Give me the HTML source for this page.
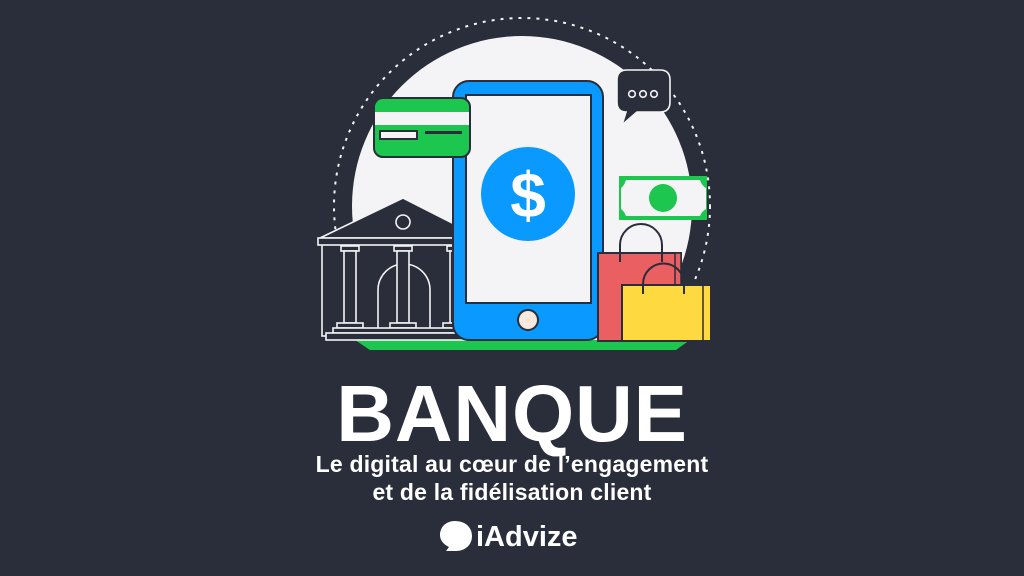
<!DOCTYPE html>
<html><head><meta charset="utf-8"><style>
html,body{margin:0;padding:0}
body{width:1024px;height:576px;background:#2a2d3a;position:relative;overflow:hidden;font-family:"Liberation Sans",sans-serif;color:#fff}
.t{position:absolute;left:0;width:1024px;text-align:center;white-space:nowrap;font-weight:bold}
</style></head><body>
<svg width="1024" height="576" style="position:absolute;left:0;top:0">
<defs><clipPath id="cc"><rect x="0" y="0" width="1024" height="342"/></clipPath></defs>
<circle cx="522" cy="206" r="188" fill="none" stroke="#f4f4f6" stroke-width="2" stroke-dasharray="3 6" clip-path="url(#cc)"/>
<circle cx="522" cy="206" r="170" fill="#f4f4f6" clip-path="url(#cc)"/>
<path d="M355 340 L690 340 L676 350 L370 350 Z" fill="#1dc64f"/>
<!-- bank -->
<g fill="#2a2d3a" stroke="#f4f4f6" stroke-width="1.6">
<rect x="322" y="244" width="144" height="92"/>
<path d="M320 238 L403 198 L470 232 L470 238 Z"/>
<rect x="318" y="238" width="150" height="7"/>
<path d="M378 333 L378 290 A26 26 0 0 1 430 290 L430 333" fill="none"/>
<rect x="341" y="246" width="18" height="5"/><rect x="344" y="251" width="12" height="72"/>
<rect x="394" y="246" width="18" height="5"/><rect x="397" y="251" width="12" height="72"/>
<rect x="447" y="246" width="18" height="5"/><rect x="450" y="251" width="12" height="72"/>
<rect x="337" y="323" width="26" height="5"/><rect x="390" y="323" width="26" height="5"/><rect x="443" y="323" width="26" height="5"/>
<rect x="333" y="328" width="134" height="5"/>
<rect x="326" y="333" width="140" height="7"/>
<circle cx="403" cy="222" r="7"/>
</g>
<!-- phone -->
<rect x="453" y="81" width="150" height="259" rx="16" fill="#0a99ff" stroke="#2a2d3a" stroke-width="2"/>
<rect x="466" y="95" width="125" height="208" fill="#f4f4f6" stroke="#2a2d3a" stroke-width="2"/>
<circle cx="528" cy="320" r="10" fill="#fbe8dd" stroke="#2a2d3a" stroke-width="2"/>
<circle cx="528" cy="194" r="47" fill="#0a99ff"/>
<text x="528" y="217" font-family="Liberation Sans" font-weight="bold" font-size="64" fill="#fff" text-anchor="middle">$</text>
<!-- card -->
<rect x="374" y="98" width="96" height="59" rx="9" fill="#1dc64f" stroke="#2a2d3a" stroke-width="2"/>
<rect x="375" y="112" width="94" height="13" fill="#f4f4f6"/>
<rect x="380" y="131" width="37" height="8" fill="#f4f4f6" stroke="#2a2d3a" stroke-width="2"/>
<rect x="425" y="131" width="37" height="3" fill="#2a2d3a"/>
<!-- chat -->
<path d="M627 70 L660 70 Q670 70 670 80 L670 102 Q670 112 660 112 L637 112 L622 125 L626 112 Q617 112 617 102 L617 80 Q617 70 627 70 Z" fill="#2a2d3a" stroke="#f4f4f6" stroke-width="1.6"/>
<g fill="none" stroke="#f4f4f6" stroke-width="1.6"><circle cx="632" cy="94" r="3.3"/><circle cx="643" cy="94" r="3.3"/><circle cx="654" cy="94" r="3.3"/></g>
<!-- bill -->
<rect x="619" y="176" width="88" height="44" fill="#1dc64f"/>
<path d="M626 180 L700 180 Q702 186 706 188 L706 209 Q702 211 700 216 L626 216 Q624 211 621 209 L621 188 Q624 186 626 180 Z" fill="#f4f4f6"/>
<circle cx="663" cy="198" r="14" fill="#1dc64f"/>
<!-- bags -->
<rect x="598" y="253" width="83" height="88" fill="#ea5f62" stroke="#2a2d3a" stroke-width="2"/>
<rect x="675" y="253" width="6" height="88" fill="#ea5f62" stroke="#2a2d3a" stroke-width="1.5"/>
<path d="M620 262 L620 245 A21 21 0 0 1 662 245 L662 262" fill="none" stroke="#2a2d3a" stroke-width="2"/>
<rect x="622" y="285" width="89" height="56" fill="#ffd940" stroke="#2a2d3a" stroke-width="2"/>
<line x1="703" y1="285" x2="703" y2="341" stroke="#2a2d3a" stroke-width="1.5"/>
<path d="M643 294 L643 284 A20 20 0 0 1 684 284 L684 294" fill="none" stroke="#2a2d3a" stroke-width="2"/>
<!-- logo bubble -->
<path d="M455 521 C466 521 472 528 472 536 C472 545 465 551 456 551 L446 551 L449 547 C443 544 440 540 440 535 C440 527 446 521 455 521 Z" fill="#fff"/>
</svg>
<div class="t" style="top:374px;font-size:80px;line-height:80px;letter-spacing:0.8px;">BANQUE</div>
<div class="t" style="top:450px;font-size:23px;line-height:28px;letter-spacing:0.2px;">Le digital au cœur de l’engagement<br>et de la fidélisation client</div>
<div style="position:absolute;left:476px;top:522px;font-size:29px;font-weight:bold;line-height:30px;">iAdvize</div>
</body></html>
